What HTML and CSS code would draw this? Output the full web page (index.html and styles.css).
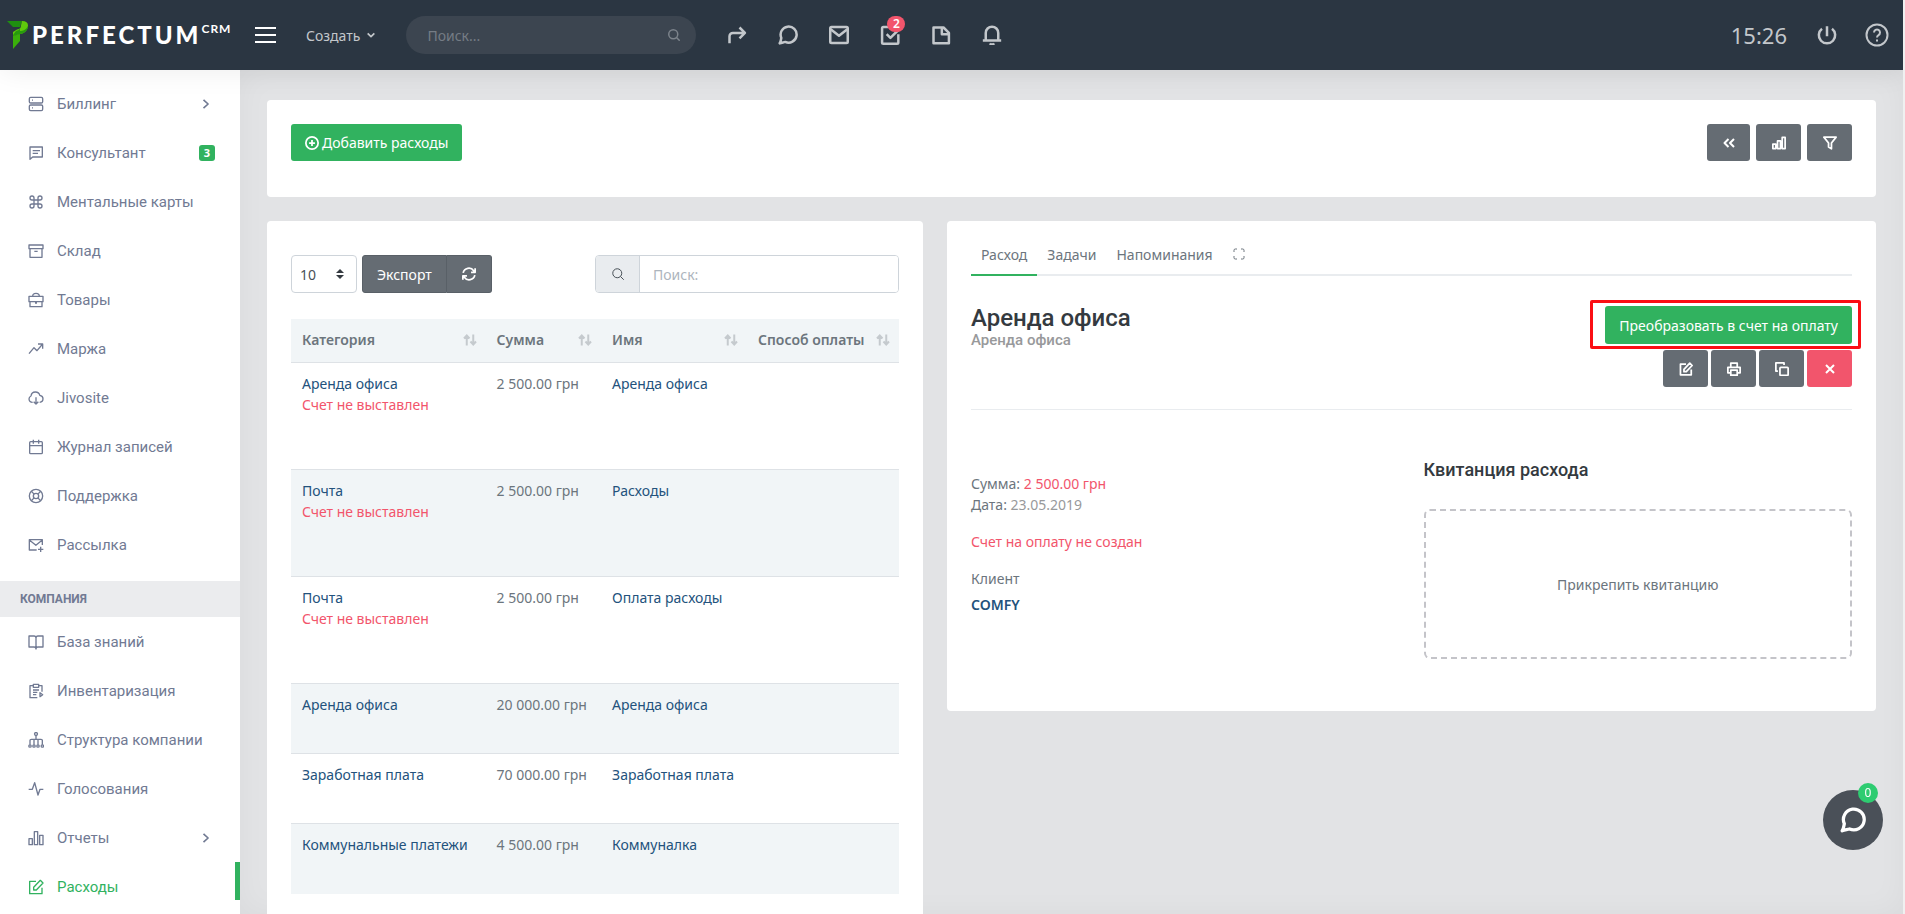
FILE: index.html
```html
<!DOCTYPE html>
<html lang="ru">
<head>
<meta charset="utf-8">
<title>Расходы — Perfectum CRM</title>
<link rel="stylesheet" href="styles.css">
</head>
<body>
<svg class="sprite" aria-hidden="true">
  <symbol id="i-server" viewBox="0 0 24 24"><rect x="2" y="2" width="20" height="8.500" rx="2"/><rect x="2" y="13.500" width="20" height="8.500" rx="2"/><path d="M6 6.300h1.500M6 17.700h1.500"/></symbol>
  <symbol id="i-message" viewBox="0 0 24 24"><path d="M3 21.500V3h18.500v15H7z"/><path d="M7 8.500h11M7 12.500h8"/></symbol>
  <symbol id="i-command" viewBox="0 0 24 24"><path d="M18 3a3 3 0 0 0-3 3v12a3 3 0 1 0 3-3H6a3 3 0 1 0 3 3V6a3 3 0 1 0-3 3h12a3 3 0 0 0 0-6z"/></symbol>
  <symbol id="i-archive" viewBox="0 0 24 24"><path d="M3 8.500V21.500h18V8.500M1.500 3h21v5.500h-21zM9.500 12.500h5"/></symbol>
  <symbol id="i-briefcase" viewBox="0 0 24 24"><path d="M1.500 6.500h21v8h-21zM3 14.500v7.500h18v-7.500M7 6.500c0-3 2-4.500 5-4.500s5 1.500 5 4.500M10.500 16.500h3"/></symbol>
  <symbol id="i-trend" viewBox="0 0 24 24"><path d="M1.500 19l7.500-9 4.500 4.500 8.500-10M15 4.500h7v7"/></symbol>
  <symbol id="i-cloud" viewBox="0 0 24 24"><path d="M7 18.500a5.500 5.500 0 0 1-5.500-5c0-2 1-3.700 3-4.500C5 5 8 3 11 3c3.500 0 6 2 6.700 5 2.800.4 4.800 2.600 4.800 5.300 0 2.800-2 4.900-5 5.200M12 11v10M8.500 17.500l3.500 3.500 3.500-3.500"/></symbol>
  <symbol id="i-calendar" viewBox="0 0 24 24"><rect x="2.500" y="4" width="19" height="18" rx="1.500"/><path d="M2.500 10h19M8 1v6M16 1v6"/></symbol>
  <symbol id="i-life" viewBox="0 0 24 24"><circle cx="12" cy="12" r="10"/><circle cx="12" cy="12" r="4"/><path d="M5 5l4.200 4.200M14.800 14.800L19 19M19 5l-4.200 4.200M9.200 14.800L5 19"/></symbol>
  <symbol id="i-mailplus" viewBox="0 0 24 24"><path d="M13 19.500H2V4h19.500V12M2 4.500l9.800 8 9.700-8M19 14.500v8M15 18.500h8"/></symbol>
  <symbol id="i-book" viewBox="0 0 24 24"><path d="M1.500 3H9a3 3 0 0 1 3 3 3 3 0 0 1 3-3h7.500v16.500H15a3 3 0 0 0-3 3 3 3 0 0 0-3-3H1.500zM12 6v16.500"/></symbol>
  <symbol id="i-clip" viewBox="0 0 24 24"><path d="M14 22H3V4h5M16 4h5v9M8 2h8v4.500H8zM7.500 10.500h9M7.500 14h6.500M7.500 17.500h5M18 14.500v6l4-3z"/></symbol>
  <symbol id="i-tree" viewBox="0 0 24 24"><circle cx="12" cy="3" r="2.200"/><circle cx="3" cy="21" r="1.800"/><circle cx="9" cy="21" r="1.800"/><circle cx="15" cy="21" r="1.800"/><circle cx="21.500" cy="21" r="1.800"/><path d="M12 5V11M3 19v-6.500C3 11.500 4 11 5 11h14.500c1 0 2 .5 2 1.500V19M9 19v-8M15 19v-8"/></symbol>
  <symbol id="i-pulse" viewBox="0 0 24 24"><path d="M1 12.500h5.500L10 2.500l5 18.500 3-8.500h5"/></symbol>
  <symbol id="i-bars" viewBox="0 0 24 24"><path d="M1.500 13h5v9h-5zM9.500 2.500h5V22h-5zM17.500 8h5v14h-5z"/></symbol>
  <symbol id="i-steps" viewBox="0 0 24 24"><path d="M1.500 14h5v7.500h-5zM9.500 8.500h5v13h-5zM17.500 2.500h5v19h-5z"/></symbol>
  <symbol id="i-edit" viewBox="0 0 24 24"><path d="M12 3.500H2.500V22H21v-9M8.500 12.500L18.500 2l4 4-10 10.500h-4z"/></symbol>
  <symbol id="i-chevron" viewBox="0 0 24 24"><path d="M6 2l11 10L6 22"/></symbol>
  <symbol id="i-down" viewBox="0 0 24 24"><path d="M2 7l10 10L22 7"/></symbol>
  <symbol id="i-search" viewBox="0 0 24 24"><circle cx="10.500" cy="10.500" r="9"/><path d="M17 17l6.500 6.500"/></symbol>
  <symbol id="i-share" viewBox="0 0 24 24"><path d="M3 22v-8.500a4 4 0 0 1 4-4h14M15 3l6.500 6.500L15 16"/></symbol>
  <symbol id="i-chat" viewBox="0 0 24 24"><path d="M2 22c1.500-2 1.300-4 2-6.500A9.600 9.600 0 1 1 8.800 20.300C6.500 21 4.500 21 2 22z"/></symbol>
  <symbol id="i-mail" viewBox="0 0 24 24"><rect x="1.500" y="2.500" width="21" height="19" rx="1.500"/><path d="M2 5l10 8 10-8"/></symbol>
  <symbol id="i-check" viewBox="0 0 24 24"><path d="M15 2.500H4A1.500 1.500 0 0 0 2.500 4v17A1.500 1.500 0 0 0 4 22.500h16.500A1.500 1.500 0 0 0 22 21V11M8 11l4.500 4.500L22 6"/></symbol>
  <symbol id="i-file" viewBox="0 0 24 24"><path d="M3 3h12l6.500 6.500V22H3zM13 3.500V11h8"/></symbol>
  <symbol id="i-bell" viewBox="0 0 24 24"><path d="M1 18.500h22M4.500 18.500V9.500a7.500 7.500 0 0 1 15 0v9M9.500 22a3 3 0 0 0 5 0"/></symbol>
  <symbol id="i-power" viewBox="0 0 24 24"><path d="M12 1.500v12M6 4.500a9.800 9.800 0 1 0 12 0"/></symbol>
  <symbol id="i-help" viewBox="0 0 24 24"><circle cx="12" cy="12" r="10.500"/><path d="M9 9.500a3 3 0 1 1 4.500 2.600c-1 .6-1.500 1.200-1.500 2.400M12 16.500v2"/></symbol>
  <symbol id="i-plus" viewBox="0 0 24 24"><circle cx="12" cy="12" r="10.500"/><path d="M12 7v10M7 12h10"/></symbol>
  <symbol id="i-rewind" viewBox="0 0 24 24"><path d="M11 4l-8 8 8 8M22 4l-8 8 8 8"/></symbol>
  <symbol id="i-filter" viewBox="0 0 24 24"><path d="M1.500 2h21L14.500 12v10l-5-3V12z"/></symbol>
  <symbol id="i-refresh" viewBox="0 0 24 24"><path d="M2 10A10 10 0 0 1 20 6.500L22 9M22.500 2v7h-7M22 14A10 10 0 0 1 4 17.500L2 15M1.500 22v-7h7"/></symbol>
  <symbol id="i-expand" viewBox="0 0 24 24"><path d="M2 8V4.500A2.500 2.500 0 0 1 4.500 2H8M16 2h3.500A2.500 2.500 0 0 1 22 4.500V8M22 16v3.500a2.500 2.500 0 0 1-2.500 2.500H16M8 22H4.500A2.500 2.500 0 0 1 2 19.500V16"/></symbol>
  <symbol id="i-print" viewBox="0 0 24 24"><path d="M6.500 9V2h11v7M6.500 18.500h-5V9h21v9.500h-5M6.500 14h11v8.500h-11z"/></symbol>
  <symbol id="i-copy" viewBox="0 0 24 24"><rect x="8.500" y="9" width="14" height="14" rx="1.500"/><path d="M5 15.500H1.500V1.500h14V5"/></symbol>
  <symbol id="i-close" viewBox="0 0 24 24"><path d="M4 4l16 16M20 4L4 20"/></symbol>
  <symbol id="i-sort" viewBox="0 0 28 24"><path d="M7.500 23V3M2 9l5.500-6L13 9M20.500 1v20M15 15l5.500 6 5.500-6"/></symbol>
</svg>

<div class="app">
  <header class="topbar">
    <a class="logo" href="#" aria-label="Perfectum CRM">
      <svg class="logo-mark" viewBox="0 0 22 30" aria-hidden="true">
        <path d="M0 1h15l-2 6H6z" fill="#1f8f10"/>
        <path d="M15 1c4 0 6 1.500 6 4.500 0 5-4 8-8 8.500l-7 2V12l4-2.500c3-.5 4-1.500 4-4z" fill="#5fc90c"/>
        <path d="M13 7c0 3-2 3.500-4 4l-3 4v1l7-2c4-.5 8-3.500 8-8-2 4-5 5-8 5z" fill="#279a0d"/>
        <path d="M6 16l7-2v7l-7 8z" fill="#3ab00b"/>
      </svg>
      <span class="logo-name">PERFECTUM</span><span class="logo-crm">CRM</span>
    </a>
    <button class="burger" type="button" aria-label="Меню"><span></span><span></span><span></span></button>
    <button class="create" type="button">Создать <svg class="ic ic-8"><use href="#i-down"/></svg></button>
    <form class="top-search"><input type="search" placeholder="Поиск..." aria-label="Поиск"><svg class="ic ic-12"><use href="#i-search"/></svg></form>
    <nav class="top-icons" aria-label="Быстрые действия">
      <a href="#" aria-label="Поделиться"><svg class="ic ic-20"><use href="#i-share"/></svg></a>
      <a href="#" aria-label="Чат"><svg class="ic ic-20"><use href="#i-chat"/></svg></a>
      <a href="#" aria-label="Почта"><svg class="ic ic-20"><use href="#i-mail"/></svg></a>
      <a href="#" aria-label="Задачи"><svg class="ic ic-20"><use href="#i-check"/></svg><span class="bubble">2</span></a>
      <a href="#" aria-label="Документы"><svg class="ic ic-20"><use href="#i-file"/></svg></a>
      <a href="#" aria-label="Уведомления"><svg class="ic ic-20"><use href="#i-bell"/></svg></a>
    </nav>
    <div class="top-right">
      <time class="clock">15:26</time>
      <a href="#" aria-label="Выход"><svg class="ic ic-20"><use href="#i-power"/></svg></a>
      <a href="#" aria-label="Помощь"><svg class="ic ic-24"><use href="#i-help"/></svg></a>
    </div>
  </header>

  <div class="body">
    <nav class="sidebar" aria-label="Основное меню">
      <ul class="menu">
        <li><a href="#"><svg class="ic ic-16"><use href="#i-server"/></svg>Биллинг<svg class="ic ic-10 end"><use href="#i-chevron"/></svg></a></li>
        <li><a href="#"><svg class="ic ic-16"><use href="#i-message"/></svg>Консультант<span class="count end">3</span></a></li>
        <li><a href="#"><svg class="ic ic-16"><use href="#i-command"/></svg>Ментальные карты</a></li>
        <li><a href="#"><svg class="ic ic-16"><use href="#i-archive"/></svg>Склад</a></li>
        <li><a href="#"><svg class="ic ic-16"><use href="#i-briefcase"/></svg>Товары</a></li>
        <li><a href="#"><svg class="ic ic-16"><use href="#i-trend"/></svg>Маржа</a></li>
        <li><a href="#"><svg class="ic ic-16"><use href="#i-cloud"/></svg>Jivosite</a></li>
        <li><a href="#"><svg class="ic ic-16"><use href="#i-calendar"/></svg>Журнал записей</a></li>
        <li><a href="#"><svg class="ic ic-16"><use href="#i-life"/></svg>Поддержка</a></li>
        <li><a href="#"><svg class="ic ic-16"><use href="#i-mailplus"/></svg>Рассылка</a></li>
      </ul>
      <h2 class="menu-title">КОМПАНИЯ</h2>
      <ul class="menu">
        <li><a href="#"><svg class="ic ic-16"><use href="#i-book"/></svg>База знаний</a></li>
        <li><a href="#"><svg class="ic ic-16"><use href="#i-clip"/></svg>Инвентаризация</a></li>
        <li><a href="#"><svg class="ic ic-16"><use href="#i-tree"/></svg>Структура компании</a></li>
        <li><a href="#"><svg class="ic ic-16"><use href="#i-pulse"/></svg>Голосования</a></li>
        <li><a href="#"><svg class="ic ic-16"><use href="#i-bars"/></svg>Отчеты<svg class="ic ic-10 end"><use href="#i-chevron"/></svg></a></li>
        <li class="active"><a href="#" aria-current="page"><svg class="ic ic-16"><use href="#i-edit"/></svg>Расходы</a></li>
      </ul>
    </nav>

    <main class="content">
      <section class="card actions">
        <button class="btn green" type="button"><svg class="ic ic-14"><use href="#i-plus"/></svg> Добавить расходы</button>
        <div class="actions-end">
          <button class="btn gray back" type="button" aria-label="Назад"><svg class="ic ic-12 heavy"><use href="#i-rewind"/></svg></button>
          <button class="btn gray square" type="button" aria-label="Статистика"><svg class="ic ic-14"><use href="#i-steps"/></svg></button>
          <button class="btn gray square" type="button" aria-label="Фильтр"><svg class="ic ic-14"><use href="#i-filter"/></svg></button>
        </div>
      </section>

      <div class="columns">
        <section class="card list">
          <div class="toolbar">
            <div class="length"><select aria-label="Записей на странице"><option>10</option><option>25</option></select><svg viewBox="0 0 8 10" aria-hidden="true"><path d="M0 4l4-4 4 4zM0 6h8l-4 4z"/></svg></div>
            <div class="group">
              <button class="btn gray" type="button">Экспорт</button><button class="btn gray square" type="button" aria-label="Обновить"><svg class="ic ic-14 heavy"><use href="#i-refresh"/></svg></button>
            </div>
            <label class="find"><span><svg class="ic ic-12"><use href="#i-search"/></svg></span><input type="search" placeholder="Поиск:" aria-label="Поиск"></label>
          </div>
          <table class="grid">
            <colgroup><col class="c1"><col class="c2"><col class="c3"><col class="c4"></colgroup>
            <thead>
              <tr>
                <th scope="col"><div>Категория<svg class="sort"><use href="#i-sort"/></svg></div></th>
                <th scope="col"><div>Сумма<svg class="sort"><use href="#i-sort"/></svg></div></th>
                <th scope="col"><div>Имя<svg class="sort"><use href="#i-sort"/></svg></div></th>
                <th scope="col"><div>Способ оплаты<svg class="sort"><use href="#i-sort"/></svg></div></th>
              </tr>
            </thead>
            <tbody>
              <tr><td><a href="#">Аренда офиса</a><p class="unbilled">Счет не выставлен</p></td><td>2 500.00 грн</td><td><a href="#">Аренда офиса</a></td><td></td></tr>
              <tr><td><a href="#">Почта</a><p class="unbilled">Счет не выставлен</p></td><td>2 500.00 грн</td><td><a href="#">Расходы</a></td><td></td></tr>
              <tr><td><a href="#">Почта</a><p class="unbilled">Счет не выставлен</p></td><td>2 500.00 грн</td><td><a href="#">Оплата расходы</a></td><td></td></tr>
              <tr><td><a href="#">Аренда офиса</a></td><td>20 000.00 грн</td><td><a href="#">Аренда офиса</a></td><td></td></tr>
              <tr><td><a href="#">Заработная плата</a></td><td>70 000.00 грн</td><td><a href="#">Заработная плата</a></td><td></td></tr>
              <tr><td><a href="#">Коммунальные платежи</a></td><td>4 500.00 грн</td><td><a href="#">Коммуналка</a></td><td></td></tr>
            </tbody>
          </table>
        </section>

        <section class="card detail">
          <nav class="tabs" aria-label="Разделы">
            <a class="current" href="#">Расход</a>
            <a href="#">Задачи</a>
            <a href="#">Напоминания</a>
            <a href="#" aria-label="Развернуть"><svg class="ic ic-12"><use href="#i-expand"/></svg></a>
          </nav>
          <div class="head">
            <div>
              <h1>Аренда офиса</h1>
              <p class="sub">Аренда офиса</p>
            </div>
            <div class="head-actions">
              <div class="marked"><button class="btn green tall" type="button">Преобразовать в счет на оплату</button></div>
              <div class="tools">
                <button class="btn gray square" type="button" aria-label="Редактировать"><svg class="ic ic-14"><use href="#i-edit"/></svg></button>
                <button class="btn gray square" type="button" aria-label="Печать"><svg class="ic ic-14"><use href="#i-print"/></svg></button>
                <button class="btn gray square" type="button" aria-label="Копировать"><svg class="ic ic-14"><use href="#i-copy"/></svg></button>
                <button class="btn red square" type="button" aria-label="Удалить"><svg class="ic ic-12 heavy"><use href="#i-close"/></svg></button>
              </div>
            </div>
          </div>
          <div class="info">
            <div class="facts">
              <p>Сумма: <span class="danger">2 500.00 грн</span></p>
              <p>Дата: <span class="muted">23.05.2019</span></p>
              <p class="danger gap">Счет на оплату не создан</p>
              <p class="gap">Клиент</p>
              <p class="client"><a href="#">COMFY</a></p>
            </div>
            <div>
              <h2 class="receipt-title">Квитанция расхода</h2>
              <button class="drop" type="button">Прикрепить квитанцию</button>
            </div>
          </div>
        </section>
      </div>
    </main>
  </div>
  <button class="chat-fab" type="button" aria-label="Чат"><svg class="ic"><use href="#i-chat"/></svg><span>0</span></button>
</div>
</body>
</html>
```

FILE: styles.css
```css
:root {
  --ui: "Noto Sans", "Open Sans", sans-serif;
  --head: Roboto, "Liberation Sans", sans-serif;
  --green: #31b25f;
  --gray: #656c73;
  --red: #f2556c;
  --link: #23527c;
  --slate: #717a93;
  --line: #dee2e6;
}

* { box-sizing: border-box; }

body {
  margin: 0;
  background: #f0f0f0;
  color: #6c757d;
  font: 14px/21px var(--ui);
}

h1, h2, p, ul { margin: 0; padding: 0; }
ul { list-style: none; }
a { color: inherit; text-decoration: none; }
button, input, select { font: inherit; color: inherit; }
button { border: 0; padding: 0; background: none; cursor: pointer; }

.sprite { display: none; }

.ic {
  flex: none;
  fill: none;
  stroke: currentColor;
  stroke-width: 2;
  stroke-linejoin: round;
  overflow: visible;
}
.ic-8 { width: 8px; height: 8px; stroke-width: 5; }
.ic-10 { width: 10px; height: 10px; stroke-width: 4; }
.ic-12 { width: 12px; height: 12px; }
.ic-14 { width: 14px; height: 14px; }
.ic-16 { width: 16px; height: 16px; }
.ic-20 { width: 20px; height: 20px; }
.ic-24 { width: 24px; height: 24px; }
.heavy { stroke-width: 4; }

.app {
  display: flex;
  flex-direction: column;
  height: 100vh;
  margin-right: 2px;
  overflow: hidden;
}

/* Top bar */
.topbar {
  position: relative;
  z-index: 2;
  flex: none;
  display: flex;
  align-items: center;
  height: 70px;
  padding: 0 14px 0 7px;
  background: #2b3642;
  color: #c3c7cb;
  box-shadow: 0 0 30px rgba(0, 0, 0, .08);
}
.topbar .ic-20 { stroke-width: 3; }
.logo { display: flex; align-items: center; width: 248px; color: #fff; }
.logo-mark { width: 22px; height: 30px; margin-right: 3px; }
.logo-name { font: 900 24px/32px Lato, sans-serif; letter-spacing: 3px; }
.logo-crm { align-self: flex-start; font: 700 12px/20px Lato, sans-serif; letter-spacing: 1px; }
.burger { display: grid; gap: 5px; width: 21px; }
.burger span { height: 2px; background: #fff; }
.create { display: flex; align-items: center; gap: 7px; margin-left: 30px; }
.top-search {
  display: flex;
  align-items: center;
  width: 290px;
  height: 38px;
  margin-left: 31px;
  padding: 0 16px 0 21px;
  border-radius: 19px;
  background: #3c4550;
  color: #7c838b;
}
.top-search input { flex: 1; min-width: 0; padding: 0; border: 0; outline: 0; background: none; }
.top-search input::placeholder { color: #757c85; opacity: 1; }
.top-search .ic { stroke-width: 3; }
.top-icons { display: flex; margin-left: 15px; }
.top-icons a { position: relative; display: grid; place-items: center; width: 51px; height: 40px; }
.bubble {
  position: absolute;
  top: 1px;
  right: 10px;
  min-width: 18px;
  border-radius: 8px;
  background: var(--red);
  color: #fff;
  font-size: 12px;
  font-weight: 600;
  line-height: 16px;
  text-align: center;
}
.top-right { display: flex; align-items: center; gap: 28px; margin-left: auto; }
.top-right a { display: flex; }
.clock { font-size: 22px; margin-right: 2px; }

/* Sidebar */
.body { display: flex; flex: 1; min-height: 0; }
.sidebar {
  flex: none;
  width: 240px;
  padding-top: 9px;
  background: #fff;
  overflow: hidden;
}
.menu a {
  display: flex;
  align-items: center;
  gap: 13px;
  height: 49px;
  padding: 0 25px 0 28px;
  color: var(--slate);
  font: 15px/24px var(--head);
}
.menu .end { margin-left: auto; }
.menu .ic-10 { margin-right: 4px; }
.count {
  width: 16px;
  border-radius: 3px;
  background: var(--green);
  color: #fff;
  font: 700 11px/16px var(--ui);
  text-align: center;
}
.menu .active a { color: var(--green); }
.menu .active { background: linear-gradient(var(--green), var(--green)) right 0 / 5px 38px no-repeat; }
.menu-title {
  margin-top: 12px;
  padding: 0 20px;
  background: #ebecee;
  color: var(--slate);
  font: 700 12px/36px var(--head);
}

/* Content */
.content {
  flex: 1;
  min-width: 0;
  padding: 30px 27px 0;
  background: #e2e3e5;
  box-shadow: inset 0 0 30px rgba(0, 0, 0, .04);
}
.card { border-radius: 4px; background: #fff; padding: 24px; }
.actions { display: flex; justify-content: space-between; padding-bottom: 36px; }
.actions-end { display: flex; gap: 6px; }
.columns {
  display: grid;
  grid-template-columns: 656fr 929fr;
  align-items: start;
  gap: 24px;
  margin-top: 24px;
}

.btn {
  display: inline-flex;
  align-items: center;
  justify-content: center;
  gap: 3px;
  height: 37px;
  padding: 0 14px;
  border-radius: 3px;
  color: #fff;
  white-space: nowrap;
}
.btn .ic-14 { stroke-width: 3; }
.green { background: var(--green); }
.gray { background: var(--gray); }
.red { background: var(--red); }
.square { width: 45px; padding: 0; }
.back { width: 43px; padding: 0; }
.tall { height: 38px; }

/* Expense list */
.list { padding-top: 34px; padding-bottom: 60px; }
.toolbar { display: flex; align-items: stretch; height: 38px; margin-bottom: 26px; }
.length { position: relative; width: 66px; margin-right: 5px; }
.length select {
  appearance: none;
  width: 100%;
  height: 100%;
  padding: 0 8px;
  border: 1px solid #ced4da;
  border-radius: 4px;
  background: #fff;
  color: #495057;
}
.length svg { position: absolute; top: 14px; right: 13px; width: 8px; height: 10px; fill: #343a40; pointer-events: none; }
.group { display: flex; }
.group .btn { height: 38px; border: 1px solid #596067; }
.group .btn:first-child { border-radius: 3px 0 0 3px; }
.group .btn:last-child { border-left: 0; border-radius: 0 3px 3px 0; }
.find { display: flex; width: 50%; margin-left: auto; border: 1px solid #ced4da; border-radius: 4px; overflow: hidden; }
.find span { display: grid; place-items: center; width: 44px; border-right: 1px solid #ced4da; background: #e9ecef; color: #495057; }
.find input { flex: 1; min-width: 0; border: 0; outline: 0; padding: 0 13px; background: #fff; }
.find input::placeholder { color: #adb5bd; opacity: 1; }

.grid { width: 100%; border-collapse: collapse; table-layout: fixed; }
.c1 { width: 32%; }
.c2 { width: 19%; }
.c3 { width: 24%; }
.c4 { width: 25%; }
.grid th { padding: 10px 9px 12px 11px; background: #f1f5f7; border-bottom: 1px solid var(--line); text-align: left; font-weight: 600; white-space: nowrap; }
.grid th div { display: flex; align-items: center; justify-content: space-between; }
.sort { width: 14px; height: 12px; fill: none; stroke: #c5cace; stroke-width: 4; }
.grid td { height: 70px; padding: 10px 0 10px 11px; border-top: 1px solid var(--line); vertical-align: top; white-space: nowrap; }
.grid td:has(.unbilled) { height: 107px; }
.grid tbody tr:nth-child(even) { background: #f1f5f7; }
.grid td a { color: var(--link); }
.unbilled, .danger { color: var(--red); }

/* Expense details */
.tabs { display: flex; border-bottom: 2px solid #e9ecef; }
.tabs a { display: flex; align-items: center; height: 31px; margin-bottom: -2px; padding: 0 10px 11px; border-bottom: 2px solid transparent; }
.tabs .current { border-color: var(--green); }
.head { display: flex; justify-content: space-between; padding: 30px 0 22px; border-bottom: 1px solid #e9ecef; }
h1 { color: #343a40; font: 500 24px/25px var(--head); }
.sub { color: #98999b; font: 500 15px/18px var(--head); }
.head-actions { display: flex; flex-direction: column; align-items: flex-end; gap: 6px; }
.marked { position: relative; display: flex; }
.marked::after {
  content: "";
  position: absolute;
  inset: -6px -9px -5px -15px;
  border: 3px solid #fb0e14;
  border-radius: 2px;
  pointer-events: none;
}
.tools { display: flex; gap: 3px; }
.info { display: grid; grid-template-columns: 1fr 1fr; gap: 24px; padding: 48px 0 28px; }
.facts { padding-top: 15px; }
.gap { margin-top: 16px; }
.muted { color: #98999b; }
.client { margin-top: 5px; color: #23527c; font-weight: 600; }
.receipt-title { color: #343a40; font: 500 18px/24px var(--head); margin-bottom: 27px; }
.drop { width: 100%; height: 150px; border: 2px dashed #c4c4c9; border-radius: 6px; }

/* Chat launcher floats over the page */
.chat-fab {
  position: fixed;
  right: 22px;
  bottom: 64px;
  z-index: 3;
  display: grid;
  place-items: center;
  width: 60px;
  height: 60px;
  border-radius: 50%;
  background: #4a5058;
  color: #fff;
}
.chat-fab .ic { width: 26px; height: 26px; stroke-width: 3; }
.chat-fab span {
  position: absolute;
  top: -7px;
  right: 5px;
  width: 20px;
  border-radius: 50%;
  background: #2ecc71;
  font-size: 12px;
  line-height: 20px;
}
```
